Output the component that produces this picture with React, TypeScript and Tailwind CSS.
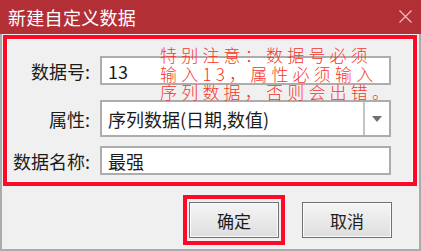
import React from "react";

const cjk = { fontFamily: '"Noto Sans CJK SC", "Noto Sans", sans-serif' };

function Btn({ children }: { children: React.ReactNode }) {
  return (
    <div className="w-[90px] h-[36px] border border-[#707070] bg-gradient-to-b from-[#f5f5f5] to-[#dedede] shadow-[inset_0_0_0_1px_#fbfbfb] flex items-center justify-center text-[17px] text-[#1c1c1c] leading-none">
      {children}
    </div>
  );
}

export default function App() {
  return (
    <div className="w-[421px] h-[251px] flex flex-col bg-[#f0f0f0] relative overflow-hidden" style={cjk}>
      {/* Title bar */}
      <div className="h-[34px] bg-[#b32f36] flex items-center justify-between pl-[8px] pr-[9px] shrink-0">
        <span className="text-white text-[18px] leading-none tracking-[0.3px]">新建自定义数据</span>
        <svg width="13" height="13" viewBox="0 0 13 13" className="mb-[1px]">
          <path d="M0.5 0.5 L12.5 12.5 M12.5 0.5 L0.5 12.5" stroke="#ecc6c8" strokeWidth="1.1" />
        </svg>
      </div>
      {/* Body */}
      <div className="flex-1 flex flex-col border-l-2 border-r-2 border-b-2 border-[#ababab] px-[1px] pt-[1px]">
        <div className="h-[151px] border-4 border-[#ff0a26] mr-[1px]">
          <div className="h-full border border-[#fbfbfb] flex flex-col pt-[16px] text-[18px] text-[#1c1c1c]">
            <div className="flex items-center h-[29px]">
              <div className="w-[82px] text-right leading-none">数据号:</div>
              <div className="ml-[10px] w-[291px] h-[29px] border-2 border-[#adadad] bg-white flex items-center pl-[6px] leading-none">13</div>
            </div>
            <div className="flex items-center h-[37px] mt-[15px]">
              <div className="w-[82px] text-right leading-none">属性:</div>
              <div className="ml-[10px] w-[291px] h-[37px] border-2 border-[#adadad] bg-white flex items-center leading-none">
                <div className="flex-1 pl-[6px] whitespace-nowrap">序列数据(日期,数值)</div>
                <div className="w-[26px] h-full border-l-2 border-[#c4c4c4] flex items-center justify-center">
                  <svg width="10" height="6" viewBox="0 0 10 6"><path d="M0 0 H10 L5 6 Z" fill="#707070" /></svg>
                </div>
              </div>
            </div>
            <div className="flex items-center h-[29px] mt-[9px]">
              <div className="w-[82px] text-right leading-none">数据名称:</div>
              <div className="ml-[10px] w-[291px] h-[29px] border-2 border-[#adadad] bg-white flex items-center pl-[6px] leading-none">最强</div>
            </div>
          </div>
        </div>
        <div className="flex justify-end items-start pr-[26px] mt-[9px]">
          <div className="border-4 border-[#ff0a26] px-[2px] py-[3px]">
            <Btn>确定</Btn>
          </div>
          <div className="ml-[17px] mt-[7px]">
            <Btn>取消</Btn>
          </div>
        </div>
      </div>
      {/* Annotation overlay */}
      <div className="absolute left-[160px] top-[46px] text-[17px] leading-[18.5px] tracking-[4.2px] text-[#f7352a] font-light whitespace-nowrap" style={cjk}>
        <div>特别注意：数据号必须</div>
        <div>输入13，属性必须输入</div>
        <div>序列数据，否则会出错。</div>
      </div>
    </div>
  );
}
